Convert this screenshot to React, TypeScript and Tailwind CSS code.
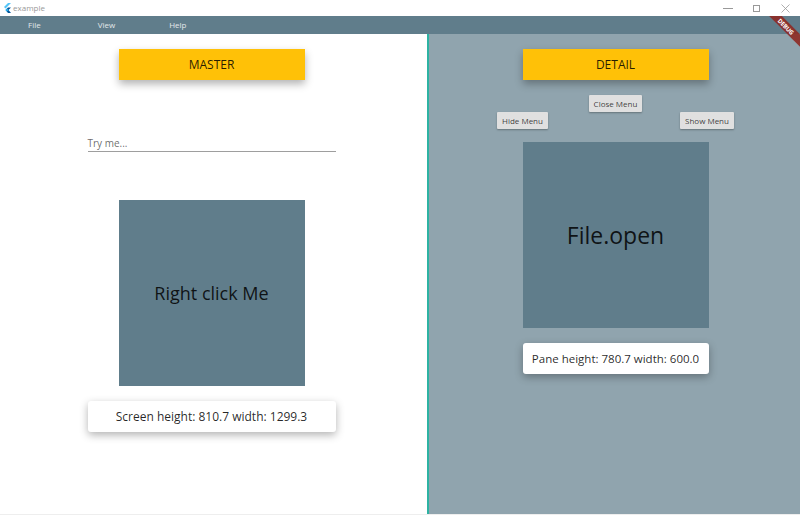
import React from "react";

// Botão amarelo do topo de cada painel
function HeaderButton({ label }: { label: string }) {
  return (
    <div className="w-[186px] h-[31px] bg-[#ffc107] flex items-center justify-center text-[12px] text-black/85 shadow-[0_4px_8px_rgba(0,0,0,0.3)]">
      {label}
    </div>
  );
}

// Botão pequeno cinza (Close / Hide / Show Menu)
function SmallButton({ label }: { label: string }) {
  return (
    <div className="h-[17px] px-[5px] bg-[#e0e0e0] flex items-center justify-center text-[8px] text-black/75 shadow-[0_1px_2px_rgba(0,0,0,0.3)] rounded-[1px]">
      {label}
    </div>
  );
}

function InfoCard({ text, width, size }: { text: string; width: string; size: string }) {
  return (
    <div
      className={`${width} ${size} h-[31px] bg-white rounded-[3px] flex items-center justify-center text-black/85 shadow-[0_3px_8px_rgba(0,0,0,0.3)]`}
    >
      {text}
    </div>
  );
}

function FlutterLogo() {
  return (
    <svg width="8" height="10" viewBox="0 0 8 10">
      <path d="M5 0h3L2.5 5.5 1 4z" fill="#54c5f8" />
      <path d="M5 4.5h3L5.5 7 8 10H5L2.5 7z" fill="#01579b" />
      <path d="M2.5 7 4 5.5 5.5 7 4 8.5z" fill="#29b6f6" />
    </svg>
  );
}

export default function App() {
  return (
    <div
      className="w-[800px] h-[515px] flex flex-col bg-white relative overflow-hidden"
      style={{ fontFamily: '"Open Sans", "Noto Sans", sans-serif' }}
    >
      {/* Barra de título da janela */}
      <div className="h-[16px] flex items-center bg-white">
        <div className="pl-[3px] pr-[2px] flex items-center">
          <FlutterLogo />
        </div>
        <span className="text-[8px] text-[#999] leading-none">example</span>
        <div className="ml-auto flex items-center h-full">
          <div className="w-[29px] flex justify-center">
            <div className="w-[10px] h-px bg-[#999]" />
          </div>
          <div className="w-[29px] flex justify-center">
            <div className="w-[7px] h-[7px] border border-[#999]" />
          </div>
          <div className="w-[29px] flex justify-center text-[#999]">
            <svg width="9" height="9" viewBox="0 0 9 9">
              <path d="M0.5 0.5l8 8M8.5 0.5l-8 8" stroke="#999" strokeWidth="0.8" />
            </svg>
          </div>
        </div>
      </div>

      {/* Barra de menu */}
      <div className="h-[18px] bg-[#607d8b] flex items-center text-[8px] text-[#e3e8ea]">
        <span className="ml-[28px]">File</span>
        <span className="ml-[57px]">View</span>
        <span className="ml-[54px]">Help</span>
      </div>

      <div className="flex-1 flex border-b border-[#eeeeee]">
        {/* Painel master */}
        <div className="w-[427px] flex flex-col items-center pt-[15px] pr-[4px]">
          <HeaderButton label="MASTER" />
          <div className="w-[248px] mt-[56px] border-b border-[#9e9e9e] text-[10px] text-black/60 pb-[1px] leading-[14px]">
            Try me...
          </div>
          <div className="w-[186px] h-[186px] mt-[48px] bg-[#607d8b] flex items-center justify-center text-[18px] text-black/85">
            Right click Me
          </div>
          <div className="mt-[15px]">
            <InfoCard text="Screen height: 810.7 width: 1299.3" width="w-[248px]" size="text-[12px]" />
          </div>
        </div>

        <div className="w-[2px] bg-[#2db3a3]" />

        {/* Painel detail */}
        <div className="flex-1 bg-[#90a4ae] flex flex-col items-center pt-[15px] pl-[2px]">
          <HeaderButton label="DETAIL" />
          <div className="mt-[15px]">
            <SmallButton label="Close Menu" />
          </div>
          <div className="w-full flex justify-around">
            <SmallButton label="Hide Menu" />
            <SmallButton label="Show Menu" />
          </div>
          <div className="w-[186px] h-[186px] mt-[13px] bg-[#607d8b] flex items-center justify-center text-[23px] text-black/85">
            File.open
          </div>
          <div className="mt-[15px]">
            <InfoCard text="Pane height: 780.7 width: 600.0" width="w-[186px]" size="text-[11.5px]" />
          </div>
        </div>
      </div>

      {/* Faixa DEBUG */}
      <div className="absolute top-[16px] right-0 w-[40px] h-[40px] overflow-hidden">
        <div className="absolute top-[6px] right-[-16px] w-[60px] h-[9px] bg-[#8e2a24]/90 rotate-45 flex items-center justify-center text-[6px] font-bold text-white leading-none tracking-tight">
          DEBUG
        </div>
      </div>
    </div>
  );
}
